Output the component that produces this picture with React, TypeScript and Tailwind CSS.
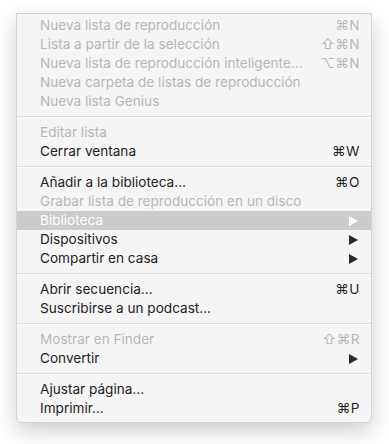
import React from "react";

type Item = {
  label: string;
  shortcut?: string;
  disabled?: boolean;
  submenu?: boolean;
  highlighted?: boolean;
};

const groups: Item[][] = [
  [
    { label: "Nueva lista de reproducción", shortcut: "⌘N", disabled: true },
    { label: "Lista a partir de la selección", shortcut: "⇧⌘N", disabled: true },
    { label: "Nueva lista de reproducción inteligente...", shortcut: "⌥⌘N", disabled: true },
    { label: "Nueva carpeta de listas de reproducción", disabled: true },
    { label: "Nueva lista Genius", disabled: true },
  ],
  [
    { label: "Editar lista", disabled: true },
    { label: "Cerrar ventana", shortcut: "⌘W" },
  ],
  [
    { label: "Añadir a la biblioteca...", shortcut: "⌘O" },
    { label: "Grabar lista de reproducción en un disco", disabled: true },
    { label: "Biblioteca", submenu: true, highlighted: true },
    { label: "Dispositivos", submenu: true },
    { label: "Compartir en casa", submenu: true },
  ],
  [
    { label: "Abrir secuencia...", shortcut: "⌘U" },
    { label: "Suscribirse a un podcast..." },
  ],
  [
    { label: "Mostrar en Finder", shortcut: "⇧⌘R", disabled: true },
    { label: "Convertir", submenu: true },
  ],
  [
    { label: "Ajustar página..." },
    { label: "Imprimir...", shortcut: "⌘P" },
  ],
];

function Arrow({ color }: { color: string }) {
  return (
    <svg width="9" height="10" viewBox="0 0 9 10" className="block">
      <path d="M0 0 L9 5 L0 10 Z" fill={color} />
    </svg>
  );
}

function Row({ item }: { item: Item }) {
  const textColor = item.highlighted
    ? "text-white"
    : item.disabled
    ? "text-[#b7b7b7]"
    : "text-[#222222]";
  return (
    <div
      className={`flex h-[19px] items-center justify-between pl-[23px] ${
        item.submenu ? "pr-[13px]" : "pr-[11px]"
      } ${item.highlighted ? "bg-[#cbcbcb]" : ""} ${textColor}`}
    >
      <span className="whitespace-nowrap">{item.label}</span>
      {item.shortcut && (
        <span className="whitespace-nowrap tracking-[0.5px]">{item.shortcut}</span>
      )}
      {item.submenu && (
        <Arrow color={item.highlighted ? "#ffffff" : "#2a2a2a"} />
      )}
    </div>
  );
}

export default function App() {
  return (
    <div className="h-[444px] w-[389px] bg-white pl-[16px] pt-[13px]">
      <div
        className="w-[356px] rounded-b-[6px] border border-[#d2d2d2] bg-[#f5f5f5] pt-[2px] pb-[4px] text-[13.6px] leading-[19px] shadow-[0_8px_22px_rgba(0,0,0,0.2)]"
        style={{ fontFamily: "Inter, 'Noto Sans', sans-serif" }}
      >
        {groups.map((g, i) => (
          <React.Fragment key={i}>
            {i > 0 && (
              <div className="flex h-[12px] items-center">
                <div className="h-[2px] w-full border-t border-[#dedede] bg-[#fbfbfb]" />
              </div>
            )}
            {g.map((item) => (
              <Row key={item.label} item={item} />
            ))}
          </React.Fragment>
        ))}
      </div>
    </div>
  );
}
